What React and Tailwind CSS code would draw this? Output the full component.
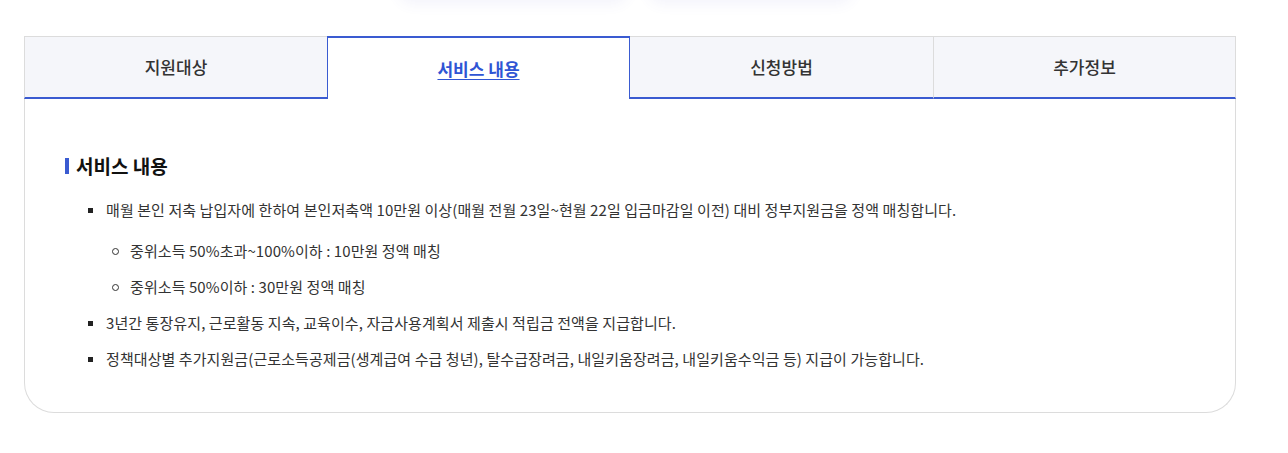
import { Fragment } from "react";

const tabs = ["지원대상", "서비스 내용", "신청방법", "추가정보"];

const items = [
    {
        text: "매월 본인 저축 납입자에 한하여 본인저축액 10만원 이상(매월 전월 23일~현월 22일 입금마감일 이전) 대비 정부지원금을 정액 매칭합니다.",
        sub: [
            "중위소득 50%초과~100%이하 : 10만원 정액 매칭",
            "중위소득 50%이하 : 30만원 정액 매칭",
        ],
    },
    {
        text: "3년간 통장유지, 근로활동 지속, 교육이수, 자금사용계획서 제출시 적립금 전액을 지급합니다.",
        sub: [],
    },
    {
        text: "정책대상별 추가지원금(근로소득공제금(생계급여 수급 청년), 탈수급장려금, 내일키움장려금, 내일키움수익금 등) 지급이 가능합니다.",
        sub: [],
    },
];

export default function App() {
    return (
        <div
            className="bg-white min-h-[453px] overflow-hidden"
            style={{ fontFamily: '"Noto Sans CJK KR", "Noto Sans", sans-serif' }}
        >
            {/* shadow of the block above */}
            <div className="flex gap-[20px] -mt-[30px] h-[30px] pl-[398px]">
                <div className="w-[230px] h-full rounded-full bg-white shadow-[0_4px_14px_rgba(90,90,200,0.07)]" />
                <div className="w-[205px] h-full rounded-full bg-white shadow-[0_4px_14px_rgba(90,90,200,0.07)]" />
            </div>

            <div className="w-[1212px] ml-[24px] mt-[36px]">
                <div className="grid grid-cols-4">
                    {tabs.map((t, i) =>
                        i === 1 ? (
                            <div
                                key={t}
                                className="h-[63px] flex items-center justify-center bg-white border-t-2 border-x border-[#3a5bd1]"
                            >
                                <span className="text-[17px] font-bold text-[#2f55d4] underline underline-offset-[3px]">
                                    {t}
                                </span>
                            </div>
                        ) : (
                            <div
                                key={t}
                                className={
                                    "h-[63px] flex items-center justify-center bg-[#f5f6fa] border-t border-[#dcdcdc] border-b-2 border-b-[#3a5bd1] " +
                                    (i === 0 ? "border-l" : "") +
                                    (i === 3 ? "border-r border-l" : "")
                                }
                            >
                                <span className="text-[17px] font-medium text-[#333]">
                                    {t}
                                </span>
                            </div>
                        )
                    )}
                </div>

                <div className="border-x border-b border-[#dcdcdc] rounded-b-[30px] pt-[55px] pb-[35px] pl-[40px] pr-[40px]">
                    <h3 className="flex items-center gap-[7px] text-[19px] font-bold text-[#111] leading-[24px]">
                        <span className="w-[4px] h-[16px] bg-[#3a5bd1]" />
                        서비스 내용
                    </h3>
                    <ul className="mt-[14px] pl-[23px] text-[15px] text-[#333] tracking-[0.08px]">
                        {items.map((it, i) => (
                            <Fragment key={i}>
                                <li className="flex items-center h-[36px]">
                                    <span className="w-[5px] h-[5px] bg-[#222] mr-[13px] shrink-0" />
                                    {it.text}
                                </li>
                                {it.sub.length > 0 && (
                                    <ul className="pl-[24px] pt-[5px]">
                                        {it.sub.map((s) => (
                                            <li key={s} className="flex items-center h-[36px]">
                                                <span className="w-[7px] h-[7px] rounded-full border border-[#333] mr-[11px] shrink-0" />
                                                {s}
                                            </li>
                                        ))}
                                    </ul>
                                )}
                            </Fragment>
                        ))}
                    </ul>
                </div>
            </div>
        </div>
    );
}
